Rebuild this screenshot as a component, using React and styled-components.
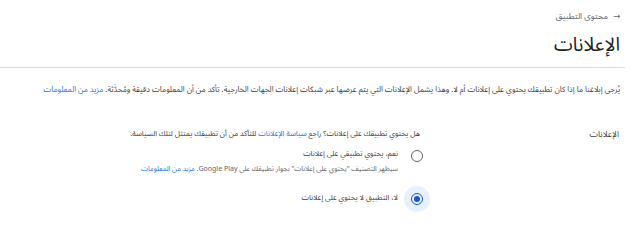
import React from 'react';
import { styled, createGlobalStyle } from 'styled-components';

const Global = createGlobalStyle`
  body {
    margin: 0;
    background: #fff;
    font-family: 'Noto Sans Arabic', 'DejaVu Sans', sans-serif;
    color: #202124;
  }
`;

const Page = styled.div`
  direction: rtl;
  width: 640px;
  height: 240px;
  overflow: hidden;
  background: #fff;
`;

const Header = styled.header`
  padding: 10px 5px 0 0;
  border-bottom: 1px solid #dadce0;
  margin-right: 15px;
  height: 57px;
`;

const Crumb = styled.div`
  display: flex;
  align-items: center;
  gap: 5px;
  font-size: 8.5px;
  line-height: 13px;
  color: #5f6368;
  height: 13px;
`;

const Title = styled.h1`
  margin: 8px 0 0;
  font-size: 19px;
  line-height: 28px;
  font-weight: 400;
  color: #202124;
`;

const Intro = styled.p`
  margin: 15px 20px 0 0;
  font-size: 7.8px;
  line-height: 14px;
  color: #3c4043;
  white-space: nowrap;
`;

const Link = styled.a`
  color: #1a73e8;
  text-decoration: none;
`;

const Section = styled.div`
  display: grid;
  grid-template-columns: 199px 1fr;
  margin-top: 30px;
  padding-right: 21px;
`;

const Label = styled.div`
  font-size: 8.5px;
  line-height: 16px;
  margin-top: -1px;
  color: #3c4043;
`;

const Question = styled.div`
  font-size: 7.5px;
  line-height: 14px;
  color: #3c4043;
`;

const Options = styled.div`
  display: flex;
  flex-direction: column;
  gap: 16px;
  margin-top: 6px;
  margin-right: -10px;
`;

const Option = styled.label`
  display: flex;
  align-items: flex-start;
  gap: 6px;
`;

const RadioWrap = styled.span`
  width: 26px;
  height: 26px;
  border-radius: 50%;
  flex: none;
  display: flex;
  align-items: center;
  justify-content: center;
  margin-top: ${p => (p.$checked ? '-5px' : '-4px')};
  background: ${p => (p.$checked ? '#e8f0fe' : 'transparent')};
`;

const Radio = styled.span`
  width: 12px;
  height: 12px;
  border-radius: 50%;
  border: 1.5px solid ${p => (p.$checked ? '#1a56c4' : '#5f6368')};
  box-sizing: border-box;
  display: flex;
  align-items: center;
  justify-content: center;
  &::after {
    content: '';
    width: 6px;
    height: 6px;
    border-radius: 50%;
    background: ${p => (p.$checked ? '#1a56c4' : 'transparent')};
  }
`;

const OptionText = styled.div`
  display: flex;
  flex-direction: column;
`;

const OptionTitle = styled.span`
  font-size: 7.5px;
  line-height: 15px;
  color: #3c4043;
`;

const Hint = styled.span`
  font-size: 7px;
  line-height: 13px;
  color: #5f6368;
`;

export default function App() {
  return (
    <Page dir="rtl">
      <Global />
      <Header>
        <Crumb>
          <span>→</span>
          <span>محتوى التطبيق</span>
        </Crumb>
        <Title>الإعلانات</Title>
      </Header>
      <Intro>
        يُرجى إبلاغنا ما إذا كان تطبيقك يحتوي على إعلانات أم لا. وهذا يشمل الإعلانات التي يتم عرضها عبر شبكات إعلانات الجهات الخارجية. تأكد من أن المعلومات دقيقة ومُحدَّثة.{' '}
        <Link href="#">مزيد من المعلومات</Link>
      </Intro>
      <Section>
        <Label>الإعلانات</Label>
        <div>
          <Question>
            هل يحتوي تطبيقك على إعلانات؟ راجع <Link href="#">سياسة الإعلانات</Link> للتأكد من أن تطبيقك يمتثل لتلك السياسة.
          </Question>
          <Options>
            <Option>
              <RadioWrap>
                <Radio />
              </RadioWrap>
              <OptionText>
                <OptionTitle>نعم، يحتوي تطبيقي على إعلانات</OptionTitle>
                <Hint>
                  سيظهر التصنيف "يحتوي على إعلانات" بجوار تطبيقك على Google Play.{' '}
                  <Link href="#">مزيد من المعلومات</Link>
                </Hint>
              </OptionText>
            </Option>
            <Option>
              <RadioWrap $checked>
                <Radio $checked />
              </RadioWrap>
              <OptionText>
                <OptionTitle>لا، التطبيق لا يحتوي على إعلانات</OptionTitle>
              </OptionText>
            </Option>
          </Options>
        </div>
      </Section>
    </Page>
  );
}
